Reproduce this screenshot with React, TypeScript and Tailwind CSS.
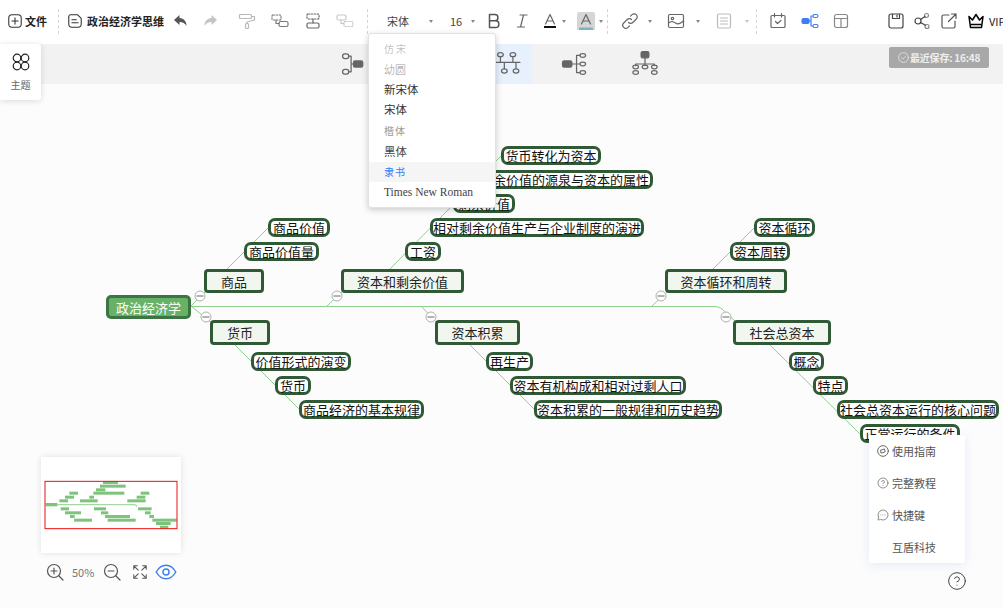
import type { ReactNode } from "react";
import { CircleHelp, MessageCircleMore } from "lucide-react";

type MapNode = { text: string; x: number; y: number; w: number; h?: number; kind?: "root" | "main" };

// page coordinates, the canvas starts at y = 84
const nodes: MapNode[] = [
  { text: "商品价值", x: 268, y: 218, w: 62 },
  { text: "商品价值量", x: 244, y: 242, w: 75 },
  { text: "商品", x: 204, y: 269, w: 60, kind: "main" },
  { text: "货币", x: 210, y: 320, w: 60, kind: "main" },
  { text: "价值形式的演变", x: 251, y: 352, w: 100 },
  { text: "货币", x: 275, y: 376, w: 36 },
  { text: "商品经济的基本规律", x: 299, y: 400, w: 125 },
  { text: "货币转化为资本", x: 501, y: 146, w: 100 },
  { text: "剩余价值的源泉与资本的属性", x: 476, y: 170, w: 177 },
  { text: "剩余价值", x: 453, y: 194, w: 62 },
  { text: "相对剩余价值生产与企业制度的演进", x: 430, y: 218, w: 214 },
  { text: "工资", x: 405, y: 242, w: 36 },
  { text: "资本和剩余价值", x: 341, y: 269, w: 123, kind: "main" },
  { text: "资本积累", x: 435, y: 320, w: 85, kind: "main" },
  { text: "再生产", x: 486, y: 352, w: 47 },
  { text: "资本有机构成和相对过剩人口", x: 510, y: 376, w: 176 },
  { text: "资本积累的一般规律和历史趋势", x: 534, y: 400, w: 188 },
  { text: "资本循环", x: 754, y: 218, w: 61 },
  { text: "资本周转", x: 730, y: 242, w: 60 },
  { text: "资本循环和周转", x: 665, y: 269, w: 122, kind: "main" },
  { text: "社会总资本", x: 733, y: 320, w: 98, kind: "main" },
  { text: "概念", x: 789, y: 352, w: 35 },
  { text: "特点", x: 813, y: 376, w: 35 },
  { text: "社会总资本运行的核心问题", x: 837, y: 400, w: 162 },
  { text: "正常运行的条件", x: 860, y: 424, w: 100 },
  { text: "政治经济学", x: 106, y: 295, w: 85, kind: "root" },
];

const collapse = [
  [200, 296],
  [206, 317],
  [337, 296],
  [431, 317],
  [661, 296],
  [726, 317],
];

const links = [
  "M191 306.5H715Q719 306.5 722 309L737 323",
  "M191 306L206 291",
  "M191 306L212 323",
  "M327 306L343 291",
  "M421 306L437 323",
  "M652 306L668 291",
  "M227 269L268 228",
  "M235 345L300 410",
  "M389 270L501 156",
  "M470 345L535 410",
  "M713 269L754 228",
  "M770 345L861 435",
];

const fonts = [
  { text: "仿宋", className: "text-[10px] text-[#a8a8a8] tracking-[2px] font-light" },
  { text: "幼圆", className: "text-[11px] text-[#999] font-light" },
  { text: "新宋体", className: "text-[11.500px] text-[#333]" },
  { text: "宋体", className: "text-[11.500px] text-[#333]" },
  { text: "楷体", className: "text-[10px] text-[#999] tracking-[1px]" },
  { text: "黑体", className: "text-[11.500px] text-[#444]" },
  { text: "隶书", className: "text-[10px] text-[#2f7df6] tracking-[1px]", active: true },
  { text: "Times New Roman", className: "text-[11.500px] text-[#444] font-['Liberation_Serif',serif]" },
];

const miniBars = [
  [219, 264, 97], [210, 287, 108], [198, 226, 119], [190, 283, 129], [118, 144, 129],
  [105, 132, 141], [332, 358, 129], [320, 346, 141], [178, 192, 141], [88, 114, 152],
  [150, 203, 152], [292, 347, 152], [92, 117, 176], [192, 228, 176], [324, 365, 176],
  [105, 153, 188], [213, 235, 188], [345, 362, 188], [120, 134, 199], [225, 300, 199],
  [358, 372, 199], [132, 186, 210], [233, 317, 210], [367, 440, 210], [378, 422, 220],
  [390, 415, 231],
];

function Icon({ children, className = "", size = 18 }: { children: ReactNode; className?: string; size?: number }) {
  return (
    <svg
      width={size}
      height={size}
      viewBox="0 0 18 18"
      fill="none"
      stroke="currentColor"
      strokeWidth="1.2"
      strokeLinecap="round"
      strokeLinejoin="round"
      className={`shrink-0 ${className}`}
    >
      {children}
    </svg>
  );
}

function Caret({ className = "" }: { className?: string }) {
  return <span className={`h-0 w-0 shrink-0 border-x-[2.5px] border-t-[3px] border-x-transparent border-t-[#888] ${className}`} />;
}

function Divider({ className = "" }: { className?: string }) {
  return <span className={`h-[25px] w-0 shrink-0 border-l border-dashed border-[#d4d4d4] ${className}`} />;
}

function Toolbar() {
  return (
    <div className="flex h-[44px] shrink-0 items-center overflow-hidden bg-white pb-[2px] pl-[7px] text-[#555] [&>*]:shrink-0">
      <Icon size={16} className="text-[#333]">
        <rect x="2" y="2" width="14" height="14" rx="3.5" />
        <path d="M9 5.5v7M5.5 9h7" />
      </Icon>
      <span className="ml-[2px] w-[24px] text-[11px] font-bold text-[#222]">文件</span>
      <Divider className="ml-[9px]" />
      <Icon size={16} className="ml-[8px] text-[#333]">
        <path d="M4 2h8l4 4v6.5a3.5 3.5 0 0 1-3.500 3.500H5.500A3.500 3.500 0 0 1 2 12.500V4a2 2 0 0 1 2-2Z" />
        <path d="M5.500 7.500h5M5.500 11h7" />
      </Icon>
      <span className="ml-[4px] w-[77px] whitespace-nowrap text-[11px] font-bold text-[#222]">政治经济学思维</span>
      <Icon className="ml-[8px] text-[#555]">
        <path fill="currentColor" stroke="none" d="M7.500 3 2 8l5.500 5V9.900c3.300 0 5.500 1 7 4.100 0-4.700-2.400-7.500-7-8Z" />
      </Icon>
      <Icon className="ml-[11px] text-[#c4c4c4]">
        <path fill="currentColor" stroke="none" d="M10.500 3 16 8l-5.500 5V9.900c-3.300 0-5.500 1-7 4.100 0-4.700 2.400-7.500 7-8Z" />
      </Icon>
      <Icon className="ml-[19px] text-[#b9b9b9]">
        <rect x="1.500" y="2.500" width="12" height="4" rx="1" />
        <path d="M13.500 4.500h3v3.500L9 10v1.500" />
        <rect x="7.500" y="11.500" width="3" height="5" rx="1" />
      </Icon>
      <Icon className="ml-[15px] text-[#777]">
        <rect x="1" y="3" width="9" height="5" rx="1" strokeDasharray="1.500 1.500" />
        <path d="M5 8v3.500h3" />
        <rect x="8" y="9.500" width="9" height="5" rx="1.500" />
      </Icon>
      <Icon className="ml-[15px] text-[#666]">
        <rect x="3" y="2" width="12" height="5" rx="1" strokeDasharray="1.500 1.500" />
        <path d="M9 7v4" />
        <rect x="3" y="11" width="12" height="5" rx="1.500" />
      </Icon>
      <Icon className="ml-[14px] text-[#c8c8c8]">
        <rect x="1" y="3" width="9" height="5" rx="1.500" />
        <path d="M5 8v3.500h3" />
        <rect x="8" y="9.500" width="9" height="5" rx="1" strokeDasharray="1.500 1.500" />
      </Icon>
      <Divider className="ml-[13px]" />
      <span className="ml-[19px] w-[23px] whitespace-nowrap text-[11px] text-[#444]">宋体</span>
      <Caret className="ml-[19px]" />
      <span className="ml-[17px] w-[12px] text-[11px] text-[#444]">16</span>
      <Caret className="ml-[9px]" />
      <Icon className="ml-[10px] text-[#555]">
        <path strokeWidth="1.500" d="M4.500 2.500h5.300a3 3 0 0 1 0 6.300H4.500Zm0 6.300h6a3.300 3.300 0 0 1 0 6.700h-6Z" />
      </Icon>
      <Icon className="ml-[10px] text-[#666]">
        <path d="M7 3h7M4.500 15h7M10.500 3l-3 12" />
      </Icon>
      <Icon className="ml-[10px] text-[#666]">
        <path d="M4.500 12 9 2.500 13.500 12M6 9h6" />
        <rect x="3" y="14" width="12" height="2" fill="#111" stroke="none" />
      </Icon>
      <Caret className="ml-[3px]" />
      <span className="ml-[11px] flex h-[18px] w-[18px] items-center justify-center rounded-t-[2px] bg-[#d6d6d6] text-[#666]">
        <Icon>
          <path d="M4.500 12 9 2.500 13.500 12M6 9h6" />
          <rect x="2" y="15.500" width="14" height="2.500" fill="#7fb0c9" stroke="none" />
        </Icon>
      </span>
      <Caret className="ml-[4px]" />
      <Divider className="ml-[4px]" />
      <Icon className="ml-[13px] text-[#666]">
        <path d="M7.500 10.500a3 3 0 0 0 4.300 0l3.500-3.500a3 3 0 0 0-4.300-4.300L9.500 4.200" />
        <path d="M10.500 7.500a3 3 0 0 0-4.300 0l-3.500 3.500a3 3 0 0 0 4.300 4.300l1.500-1.500" />
      </Icon>
      <Caret className="ml-[9px]" />
      <Icon className="ml-[15px] text-[#666]">
        <rect x="1.500" y="2.500" width="15" height="13" rx="1.500" />
        <circle cx="5.500" cy="6.500" r="1.200" />
        <path d="M1.500 11c3-2.500 5-1.500 7 0s4.500 1 8-2" />
      </Icon>
      <Caret className="ml-[11px]" />
      <Icon className="ml-[15px] text-[#bbb]">
        <rect x="2.500" y="2" width="13" height="14" rx="1.500" />
        <path d="M5.500 6h7M5.500 9h7M5.500 12h7" />
      </Icon>
      <Caret className="ml-[12px] opacity-50" />
      <Divider className="ml-[7px]" />
      <Icon className="ml-[12px] text-[#666]">
        <rect x="2" y="3.500" width="14" height="12" rx="1" />
        <path d="M5.500 1.500v3.500M12.500 1.500v3.500M6.500 9.500l2 2 3.500-3" />
      </Icon>
      <Icon className="ml-[14px] text-[#3f7df3]">
        <rect x="1" y="6.500" width="7" height="5" rx="1.500" fill="currentColor" />
        <path d="M8 9h2M10 4v10M10 4h2M10 14h2" />
        <rect x="12" y="2.500" width="5" height="3" rx="1.500" />
        <rect x="12" y="12.500" width="5" height="3" rx="1.500" />
      </Icon>
      <Icon className="ml-[13px] text-[#888]">
        <rect x="2.500" y="2.500" width="13" height="13" rx="2" />
        <path d="M2.500 6.500h13M9 6.500v9" />
      </Icon>
      <Icon className="ml-[37px] text-[#444]">
        <rect x="2" y="2" width="14" height="14" rx="2" />
        <path d="M5.500 2v4.500h7V2" />
        <path d="M10 3v2" />
      </Icon>
      <Icon className="ml-[8px] text-[#444]">
        <circle cx="5" cy="9" r="3" />
        <circle cx="13.500" cy="3.500" r="2" className="text-[#888]" />
        <circle cx="14" cy="14.500" r="2" className="text-[#888]" />
        <path d="M7.500 7.500 12 4.500M7.500 10.500l5 2.700" />
      </Icon>
      <Icon className="ml-[9px] text-[#555]">
        <path d="M9 3H3.500A1.500 1.500 0 0 0 2 4.500v10A1.500 1.500 0 0 0 3.500 16h10a1.500 1.500 0 0 0 1.500-1.500V9" />
        <path d="M8.500 9.500 16 2M11.500 2H16v4.500" />
      </Icon>
      <Icon className="ml-[9px] text-black">
        <path strokeWidth="1.500" d="M2 4.500 5.500 8 9 2.500 12.500 8 16 4.500 14.500 15.500h-11Z" />
        <path strokeWidth="1.500" d="M4 12.500h10" />
      </Icon>
      <span className="ml-[4px] whitespace-nowrap text-[11px] text-[#222]">VIP</span>
    </div>
  );
}

function LayoutBar() {
  return (
    <div className="flex h-[40px] shrink-0 items-center bg-[#f2f2f2] pl-[341px] text-[#666]">
      <Icon size={28}>
        <rect x="1" y="2.500" width="4" height="3" rx="1.500" strokeWidth=".8" />
        <rect x="1" y="12.500" width="4" height="3" rx="1.500" strokeWidth=".8" />
        <path strokeWidth=".8" d="M5 4h1.500v10H5M6.500 9H8" />
        <rect x="8" y="7" width="6" height="4" rx="1" fill="currentColor" strokeWidth=".8" />
      </Icon>
      <span className="ml-[98px] flex h-[40px] w-[65px] items-center bg-[#e7f0fd] pl-[28px]">
        <Icon size={28}>
          <ellipse cx="3.500" cy="3" rx="1.800" ry="1.300" strokeWidth=".8" />
          <ellipse cx="11.500" cy="3" rx="1.800" ry="1.300" strokeWidth=".8" />
          <path strokeWidth=".8" d="M3.500 4.500v3M11.500 4.500v3M0 8h16M6 8v4M13.500 8v4" />
          <ellipse cx="6" cy="13.500" rx="1.800" ry="1.300" strokeWidth=".8" />
          <ellipse cx="13.500" cy="13.500" rx="1.800" ry="1.300" strokeWidth=".8" />
        </Icon>
      </span>
      <Icon size={28} className="ml-[29px]">
        <rect x="1" y="7" width="6" height="4" rx="1" fill="currentColor" strokeWidth=".8" />
        <path strokeWidth=".8" d="M7 9h5M10 3.500V14.500M10 3.500h2M10 14.500h2" />
        <ellipse cx="14" cy="3.500" rx="1.800" ry="1.200" strokeWidth=".8" />
        <ellipse cx="14" cy="9" rx="1.800" ry="1.200" strokeWidth=".8" />
        <ellipse cx="14" cy="14.500" rx="1.800" ry="1.200" strokeWidth=".8" />
      </Icon>
      <Icon size={28} className="ml-[42px]">
        <rect x="6.500" y="1" width="5" height="4" rx="1" fill="currentColor" strokeWidth=".8" />
        <path strokeWidth=".8" d="M9 5v5M3 9h12M3 9v1M15 9v1" />
        <ellipse cx="3" cy="11" rx="1.800" ry="1.200" strokeWidth=".8" />
        <ellipse cx="9" cy="11" rx="1.800" ry="1.200" strokeWidth=".8" />
        <ellipse cx="15" cy="11" rx="1.800" ry="1.200" strokeWidth=".8" />
        <ellipse cx="3" cy="14.500" rx="1.800" ry="1.200" strokeWidth=".8" />
        <ellipse cx="15" cy="14.500" rx="1.800" ry="1.200" strokeWidth=".8" />
      </Icon>
    </div>
  );
}

function Node({ node }: { node: MapNode }) {
  const kind =
    node.kind === "root"
      ? "bg-[#68b268] border-[#3d7444] border-[3px] rounded-[5px] text-white"
      : node.kind === "main"
        ? "bg-[#f1f6ef] border-[#2f5a35] border-[3px] rounded-[4px] text-[#222]"
        : "bg-white border-[#2f5a35] border-[3px] rounded-[7px] text-[#111]";
  const height = node.kind ? (node.y === 320 ? 25 : 24) : 19;
  return (
    <div
      className={`absolute flex items-center justify-center whitespace-nowrap text-[13px] leading-none ${kind}`}
      style={{ left: node.x, top: node.y - 84, width: node.w, height }}
    >
      {node.text}
    </div>
  );
}

function MiniMap() {
  return (
    <div className="absolute left-[41px] top-[373px]">
      <div className="h-[96px] w-[140px] bg-white shadow-[0_0_6px_rgba(0,0,0,0.12)]">
        <svg width="140" height="96" viewBox="33 21 420 288">
          <path d="M82 164H312Q318 164 322 170" stroke="#a9d6a9" strokeWidth="4" fill="none" />
          <rect x="47" y="159" width="35" height="10" fill="#7cc47c" />
          {miniBars.map(([a, b, y]) => (
            <rect key={`${a}-${y}`} x={a} y={y - 4} width={b - a} height="9" fill="#7cc47c" />
          ))}
          <rect x="45" y="94" width="396" height="142" fill="none" stroke="#ee1111" strokeWidth="3" />
        </svg>
      </div>
      <div className="mt-[9px] flex h-[20px] items-center pl-[5px] text-[#555]">
        <Icon size={18}>
          <circle cx="8" cy="8" r="6.500" />
          <path d="M13 13l4 4M5 8h6M8 5v6" />
        </Icon>
        <span className="ml-[8px] w-[24px] text-[11px] text-[#777]">50%</span>
        <Icon size={18} className="ml-[7px]">
          <circle cx="8" cy="8" r="6.500" />
          <path d="M13 13l4 4M5 8h6" />
        </Icon>
        <Icon size={16} className="ml-[11px]">
          <path d="M2 6V2h4M12 2h4v4M16 12v4h-4M6 16H2v-4M2 2l5 5M16 2l-5 5M16 16l-5-5M2 16l5-5" />
        </Icon>
        <Icon size={22} className="ml-[7px] text-[#3f7df3]">
          <path d="M1 9c2-3.500 4.800-5.500 8-5.500S15 5.500 17 9c-2 3.500-4.800 5.500-8 5.500S3 12.500 1 9Z" />
          <circle cx="9" cy="9" r="2.500" />
        </Icon>
      </div>
    </div>
  );
}

function HelpMenu() {
  const rowClass = "flex h-[32px] items-center pl-[8px] text-[11px] text-[#555]";
  return (
    <>
      <div className="absolute left-[869px] top-[351px] flex h-[128px] w-[96px] flex-col rounded-[2px] bg-white shadow-[0_2px_10px_rgba(80,120,220,0.14)]">
        <div className={rowClass}>
          <Icon size={12}>
            <circle cx="9" cy="9" r="8" strokeWidth="1.300" />
            <path d="M6 7.500 11.500 6 12 10.500 6.500 12Z" strokeWidth="1.300" />
          </Icon>
          <span className="ml-[3px]">使用指南</span>
        </div>
        <div className={rowClass}>
          <CircleHelp size={12} strokeWidth={1.3} className="shrink-0" />
          <span className="ml-[3px]">完整教程</span>
        </div>
        <div className={rowClass}>
          <MessageCircleMore size={12} strokeWidth={1.3} className="shrink-0" />
          <span className="ml-[3px]">快捷键</span>
        </div>
        <div className={`${rowClass} pl-[23px]`}>互盾科技</div>
      </div>
      <CircleHelp size={20} strokeWidth={1.1} className="absolute left-[947px] top-[487px] text-[#333]" />
    </>
  );
}

export default function App() {
  return (
    <div className="relative flex h-[608px] w-[1003px] flex-col overflow-hidden bg-[#fcfcfc] font-['Noto_Sans_CJK_SC','Liberation_Sans',sans-serif]">
      <Toolbar />
      <LayoutBar />

      <div className="relative flex-1">
        <svg className="absolute left-0 top-0" width="1003" height="524" viewBox="0 84 1003 524" fill="none">
          {links.map((d) => (
            <path key={d} d={d} stroke="#8fd08f" strokeWidth="1" />
          ))}
        </svg>
        {nodes.map((node) => (
          <Node key={`${node.text}-${node.x}`} node={node} />
        ))}
        {collapse.map(([x, y]) => (
          <svg key={`${x}-${y}`} className="absolute" width="12" height="12" viewBox="0 0 12 12" style={{ left: x - 6, top: y - 90 }}>
            <circle cx="6" cy="6" r="5" fill="#fff" stroke="#b0b0b0" />
            <path d="M2.500 6h7" stroke="#666" />
          </svg>
        ))}
        <MiniMap />
        <HelpMenu />
      </div>

      {/* theme panel */}
      <div className="absolute left-0 top-[44px] flex h-[56px] w-[41px] flex-col items-center rounded-r-[3px] bg-white pt-[9px] shadow-[0_1px_6px_rgba(0,0,0,0.14)]">
        <Icon size={18} className="text-[#222]">
          <circle cx="5" cy="5" r="3.800" />
          <circle cx="13" cy="5" r="3.800" />
          <circle cx="5" cy="13" r="3.800" />
          <circle cx="13" cy="13" r="3.800" />
        </Icon>
        <span className="mt-[9px] text-[10px] leading-none text-[#666]">主题</span>
      </div>

      {/* save badge */}
      <div className="absolute left-[889px] top-[47px] flex h-[21px] w-[100px] items-center rounded-[2px] bg-[#a8a8a8] pl-[9px] text-[10px] font-bold tracking-[-0.2px] text-[#eee]">
        <Icon size={11}>
          <circle cx="9" cy="9" r="8" />
          <path d="M5.500 9l2.500 2.500 4.500-4.500" />
        </Icon>
        <span className="ml-[1px] whitespace-nowrap">最近保存: 16:48</span>
      </div>

      {/* font dropdown */}
      <div className="absolute left-[368px] top-[33px] h-[175px] w-[128px] rounded-[3px] border border-[#e2e2e2] bg-white py-[4px] shadow-[0_2px_6px_rgba(0,0,0,0.2)]">
        {fonts.map((font) => (
          <div
            key={font.text}
            className={`flex h-[20.6px] items-center whitespace-nowrap pl-[15px] ${font.className} ${font.active ? "bg-[#f5f5f5]" : ""}`}
          >
            {font.text}
          </div>
        ))}
      </div>
    </div>
  );
}
